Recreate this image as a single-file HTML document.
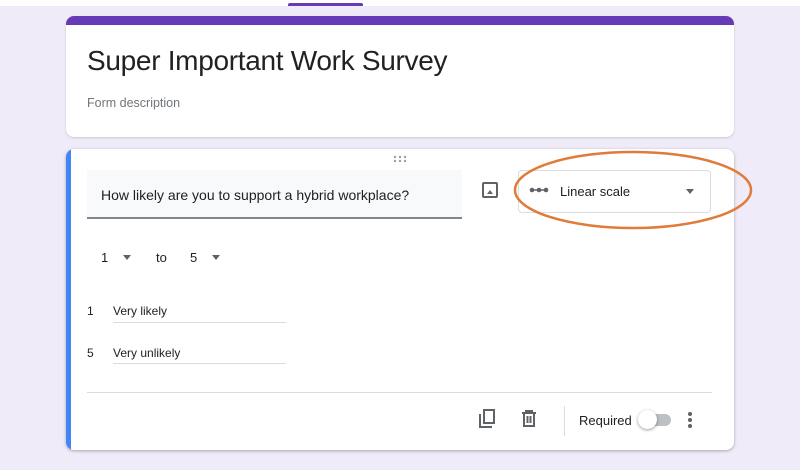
<!DOCTYPE html>
<html><head><style>
body{margin:0;width:800px;height:470px;background:#efebf8;font-family:"Liberation Sans",sans-serif;position:relative;overflow:hidden;color:#202124}
.a{position:absolute}
</style></head><body>
<div class="a" style="left:0;top:0;width:800px;height:6px;background:#fff"></div>
<div class="a" style="left:288px;top:3px;width:75px;height:3px;background:#673ab7;border-radius:2px 2px 0 0"></div>
<div class="a" style="left:66px;top:16px;width:668px;height:121px;background:#fff;border-radius:8px;box-shadow:0 1px 2px rgba(0,0,0,.15);overflow:hidden">
 <div class="a" style="left:0;top:0;width:668px;height:9px;background:#673ab7"></div>
 <div class="a" style="left:21px;top:29px;font-size:28px;letter-spacing:-0.3px;color:#202124">Super Important Work Survey</div>
 <div class="a" style="left:21px;top:80px;font-size:12.5px;color:#70757a">Form description</div>
</div>
<div class="a" style="left:66px;top:149px;width:668px;height:301px;background:#fff;border-radius:8px;box-shadow:0 1px 3px rgba(0,0,0,.3);overflow:hidden">
 <div class="a" style="left:0;top:0;width:5px;height:301px;background:#4285f4"></div>
 <svg class="a" style="left:327px;top:6px" width="14" height="8"><g fill="#9aa0a6"><circle cx="2" cy="2" r="1.2"/><circle cx="7" cy="2" r="1.2"/><circle cx="12" cy="2" r="1.2"/><circle cx="2" cy="6" r="1.2"/><circle cx="7" cy="6" r="1.2"/><circle cx="12" cy="6" r="1.2"/></g></svg>
 <div class="a" style="left:21px;top:21px;width:375px;height:47px;background:#f8f9fa;border-bottom:2px solid #80868b"></div>
 <div class="a" style="left:35px;top:38px;font-size:14px">How likely are you to support a hybrid workplace?</div>
 <svg class="a" style="left:416px;top:33px" width="16" height="16"><rect x="1" y="1" width="14" height="14" fill="none" stroke="#5f6368" stroke-width="2" rx="1"/><path d="M5 12 L8 8 L11 12Z" fill="#5f6368"/></svg>
 <div class="a" style="left:452px;top:21px;width:193px;height:43px;border:1px solid #dadce0;border-radius:4px;box-sizing:border-box"></div>
 <svg class="a" style="left:463px;top:38px" width="20" height="6"><path d="M2 3 H18" stroke="#5f6368" stroke-width="1.5"/><circle cx="3" cy="3" r="2.3" fill="#5f6368"/><circle cx="10" cy="3" r="2.3" fill="#5f6368"/><circle cx="17" cy="3" r="2.3" fill="#5f6368"/></svg>
 <div class="a" style="left:494px;top:35px;font-size:13px">Linear scale</div>
 <div class="a" style="left:620px;top:40px;border:4px solid transparent;border-top:5px solid #5f6368"></div>
 <div class="a" style="left:35px;top:101px;font-size:13px">1</div>
 <div class="a" style="left:57px;top:106px;border:4px solid transparent;border-top:5px solid #5f6368"></div>
 <div class="a" style="left:90px;top:101px;font-size:13px">to</div>
 <div class="a" style="left:124px;top:101px;font-size:13px">5</div>
 <div class="a" style="left:146px;top:106px;border:4px solid transparent;border-top:5px solid #5f6368"></div>
 <div class="a" style="left:21px;top:155px;font-size:12px">1</div>
 <div class="a" style="left:47px;top:155px;font-size:12px">Very likely</div>
 <div class="a" style="left:47px;top:173px;width:173px;height:1px;background:#dadce0"></div>
 <div class="a" style="left:21px;top:197px;font-size:12px">5</div>
 <div class="a" style="left:47px;top:197px;font-size:12px">Very unlikely</div>
 <div class="a" style="left:47px;top:214px;width:173px;height:1px;background:#dadce0"></div>
 <div class="a" style="left:21px;top:243px;width:625px;height:1px;background:#dadce0"></div>
 <svg class="a" style="left:411px;top:260px" width="20" height="20"><path d="M3 5 V18 H15" fill="none" stroke="#5f6368" stroke-width="2"/><rect x="7" y="1" width="10" height="13" fill="none" stroke="#5f6368" stroke-width="2"/></svg>
 <svg class="a" style="left:454px;top:260px" width="18" height="20"><path d="M2 4 H16 M6 4 V2 H12 V4 M4 4 V17 H14 V4 M7.5 7 V14 M10.5 7 V14" fill="none" stroke="#5f6368" stroke-width="2"/></svg>
 <div class="a" style="left:498px;top:257px;width:1px;height:30px;background:#dadce0"></div>
 <div class="a" style="left:513px;top:264px;font-size:13px">Required</div>
 <div class="a" style="left:576px;top:265px;width:29px;height:12px;background:#bdc1c6;border-radius:6px"></div>
 <div class="a" style="left:572px;top:261px;width:19px;height:19px;background:#fff;border-radius:50%;box-shadow:0 1px 3px rgba(0,0,0,.4)"></div>
 <svg class="a" style="left:621px;top:262px" width="6" height="18"><circle cx="3" cy="3" r="2" fill="#5f6368"/><circle cx="3" cy="9" r="2" fill="#5f6368"/><circle cx="3" cy="15" r="2" fill="#5f6368"/></svg>
</div>
<svg class="a" style="left:0;top:0" width="800" height="470"><ellipse cx="633" cy="190" rx="118" ry="38" fill="none" stroke="#e07b39" stroke-width="2.5"/></svg>
</body></html>
